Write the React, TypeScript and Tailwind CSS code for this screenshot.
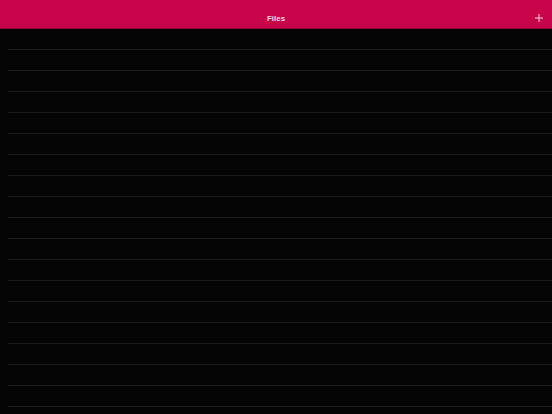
const rows = Array.from({ length: 19 }, (_, i) => i);

const App = () => {
  return (
    <div className="w-[552px] h-[414px] overflow-hidden bg-[#050505] font-['Liberation_Sans',sans-serif]">
      <header className="relative h-[29px] bg-[#c8054b] border-b border-[#8c0536] flex items-center justify-center">
        <h1 className="text-[8px] font-bold text-[#f3d0dc] leading-none mt-[10px]">Files</h1>
        <button className="absolute right-[9px] top-[14px] w-[8px] h-[8px] text-[#f3d0dc]">
          <svg viewBox="0 0 8 8" width="8" height="8" fill="none" stroke="currentColor" strokeWidth="1">
            <path d="M4 0v8M0 4h8" />
          </svg>
        </button>
      </header>

      <ul className="flex flex-col">
        {rows.map((r) => (
          <li key={r} className="h-[21px] ml-[8px] border-b border-[#1a1a1a]" />
        ))}
      </ul>
    </div>
  );
};

export default App;
